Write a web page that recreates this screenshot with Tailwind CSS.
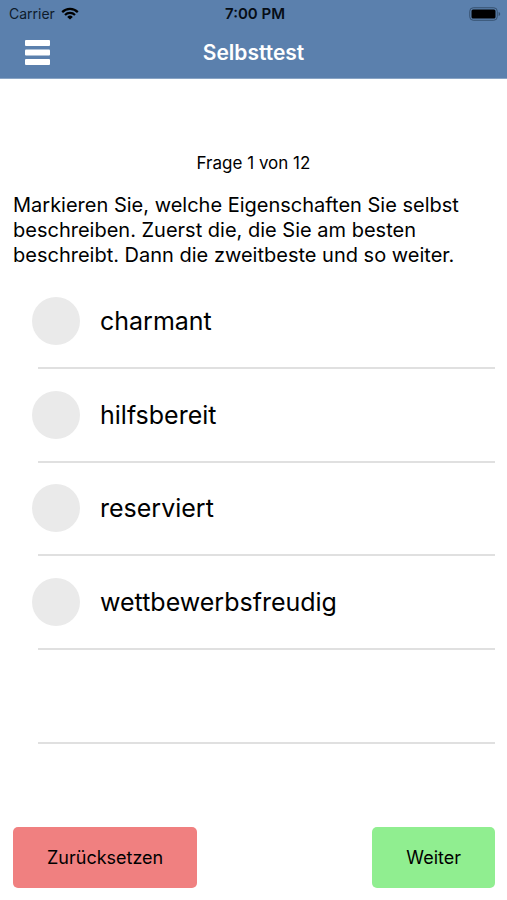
<!DOCTYPE html>
<html lang="de">
<head>
<meta charset="utf-8">
<meta name="viewport" content="width=device-width, initial-scale=1">
<title>Selbsttest</title>
<script src="https://cdn.jsdelivr.net/npm/@tailwindcss/browser@4"></script>
</head>
<body class="flex min-h-screen flex-col bg-white font-['Inter','Liberation_Sans',sans-serif] text-black">
  <header class="border-b border-[#89a4c4] bg-[#5b80ad]">
    <div class="grid h-[27px] grid-cols-3 items-center pr-[6px] pl-[9px]">
      <div class="flex items-center gap-[6px] text-[14px] leading-5 text-[#0e1b2b]">
        <span>Carrier</span>
        <svg class="h-[13px] w-[18px]" viewBox="0 0 18 13" fill="none" stroke="#000" stroke-width="2.2" aria-hidden="true">
          <path d="M1.2 5.1a11 11 0 0 1 15.6 0"/>
          <path d="M4 8a7.1 7.1 0 0 1 10 0"/>
          <path d="M9 12.6 6.2 9.9a4 4 0 0 1 5.6 0z" fill="#000" stroke="none"/>
        </svg>
      </div>
      <span class="text-center text-[15px] leading-5 font-semibold text-[#060d16]">7:00 PM</span>
      <svg class="h-[14px] w-[32px] justify-self-end" viewBox="0 0 32 14" aria-hidden="true">
        <rect x="0.75" y="0.75" width="27.5" height="12.5" rx="3.5" fill="none" stroke="#36506f" stroke-width="1"/>
        <rect x="2.5" y="2.5" width="24" height="9" rx="1.5" fill="#000"/>
        <path d="M29.6 5v4c1-.4 1.6-1.200 1.600-2s-.6-1.600-1.600-2z" fill="#36506f"/>
      </svg>
    </div>
    <div class="grid h-[51px] grid-cols-[1fr_auto_1fr] items-center px-6">
      <button type="button" aria-label="Menü" class="justify-self-start">
        <svg class="h-[26px] w-[27px]" viewBox="0 0 27 26" fill="#fff" aria-hidden="true">
          <rect x="1" y="0" width="25" height="6" rx="1"/>
          <rect x="1" y="9.500" width="25" height="6" rx="1"/>
          <rect x="1" y="19" width="25" height="6" rx="1"/>
        </svg>
      </button>
      <h1 class="text-[21px] leading-6 font-semibold text-white">Selbsttest</h1>
    </div>
  </header>

  <main class="flex flex-1 flex-col pt-[74px]">
    <p class="text-center text-[17px] leading-5">Frage 1 von 12</p>
    <p class="mt-5 px-[13px] text-[20px] leading-[25px]">Markieren Sie, welche Eigenschaften Sie selbst beschreiben. Zuerst die, die Sie am besten beschreibt. Dann die zweitbeste und so weiter.</p>

    <ul class="mt-[7px] mr-3 ml-[38px] grid flex-1 auto-rows-fr">
      <li class="flex border-b-2 border-[#e0e0e0]">
        <label class="-ml-[6px] flex flex-1 items-center gap-5 text-[25px] leading-8">
          <input type="checkbox" class="size-12 appearance-none rounded-full bg-[#eaeaea] checked:bg-[#5b80ad]">charmant
        </label>
      </li>
      <li class="flex border-b-2 border-[#e0e0e0]">
        <label class="-ml-[6px] flex flex-1 items-center gap-5 text-[25px] leading-8">
          <input type="checkbox" class="size-12 appearance-none rounded-full bg-[#eaeaea] checked:bg-[#5b80ad]">hilfsbereit
        </label>
      </li>
      <li class="flex border-b-2 border-[#e0e0e0]">
        <label class="-ml-[6px] flex flex-1 items-center gap-5 text-[25px] leading-8">
          <input type="checkbox" class="size-12 appearance-none rounded-full bg-[#eaeaea] checked:bg-[#5b80ad]">reserviert
        </label>
      </li>
      <li class="flex border-b-2 border-[#e0e0e0]">
        <label class="-ml-[6px] flex flex-1 items-center gap-5 text-[25px] leading-8">
          <input type="checkbox" class="size-12 appearance-none rounded-full bg-[#eaeaea] checked:bg-[#5b80ad]">wettbewerbsfreudig
        </label>
      </li>
      <li class="border-b-2 border-[#e0e0e0]"></li>
    </ul>
  </main>

  <footer class="mt-[83px] flex justify-between pr-3 pb-3 pl-[13px]">
    <button type="button" class="h-[61px] rounded-[5px] bg-[#f08080] px-[34px] text-[18px] leading-6">Zurücksetzen</button>
    <button type="button" class="h-[61px] rounded-[5px] bg-[#90ee90] px-[34px] text-[18px] leading-6">Weiter</button>
  </footer>
</body>
</html>
